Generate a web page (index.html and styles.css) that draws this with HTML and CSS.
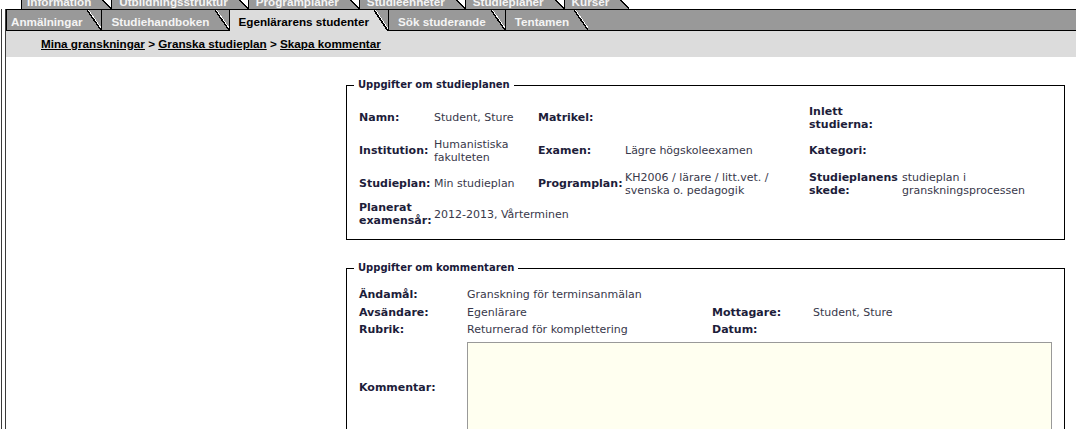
FILE: index.html
```html
<!DOCTYPE html>
<html>
	<head>
		<title>Skapa kommentar</title>
		<meta charset="utf-8">
		<link rel="stylesheet" href="styles.css">
	</head>

	<body>
		<ul class="tabs tabs_top">
			<li class="tab"><a href="#">Information</a></li>
			<li class="tab"><a href="#">Utbildningsstruktur</a></li>
			<li class="tab"><a href="#">Programplaner</a></li>
			<li class="tab"><a href="#">Studieenheter</a></li>
			<li class="tab"><a href="#">Studieplaner</a></li>
			<li class="tab"><a href="#">Kurser</a></li>
		</ul>

		<div class="frame">
			<div class="frame_inner">
				<ul class="tabs tabs_main">
					<li class="tab"><a href="#">Anmälningar</a></li>
					<li class="tab"><a href="#">Studiehandboken</a></li>
					<li class="tab tab_on"><a href="#">Egenlärarens studenter</a></li>
					<li class="tab"><a href="#">Sök studerande</a></li>
					<li class="tab"><a href="#">Tentamen</a></li>
				</ul>

				<p class="crumbs">
					<a href="#">Mina granskningar</a> &gt; <a href="#">Granska studieplan</a> &gt; <a href="#">Skapa kommentar</a>
				</p>

				<div class="content">
					<div class="side"></div>

					<div class="main">
						<fieldset class="box">
							<legend>Uppgifter om studieplanen</legend>
							<table class="info">
								<colgroup>
									<col class="w75">
									<col class="w104">
									<col class="w87">
									<col class="w184">
									<col class="w93">
									<col class="w148">
								</colgroup>
								<tr>
									<th>Namn:</th>
									<td>Student, Sture</td>
									<th>Matrikel:</th>
									<td></td>
									<th>Inlett studierna:</th>
									<td></td>
								</tr>
								<tr>
									<th>Institution:</th>
									<td>Humanistiska fakulteten</td>
									<th>Examen:</th>
									<td>Lägre högskoleexamen</td>
									<th>Kategori:</th>
									<td></td>
								</tr>
								<tr>
									<th>Studieplan:</th>
									<td>Min studieplan</td>
									<th>Programplan:</th>
									<td>KH2006 / lärare / litt.vet. / svenska o. pedagogik</td>
									<th>Studieplanens skede:</th>
									<td>studieplan i granskningsprocessen</td>
								</tr>
								<tr class="last">
									<th>Planerat examensår:</th>
									<td colspan="5">2012-2013, Vårterminen</td>
								</tr>
							</table>
						</fieldset>

						<fieldset class="box box_comment">
							<legend>Uppgifter om kommentaren</legend>
							<table class="note">
								<colgroup>
									<col class="w108">
									<col class="w245">
									<col class="w101">
									<col class="w238">
								</colgroup>
								<tr>
									<th>Ändamål:</th>
									<td>Granskning för terminsanmälan</td>
									<th></th>
									<td></td>
								</tr>
								<tr>
									<th>Avsändare:</th>
									<td>Egenlärare</td>
									<th>Mottagare:</th>
									<td>Student, Sture</td>
								</tr>
								<tr>
									<th>Rubrik:</th>
									<td>Returnerad för komplettering</td>
									<th>Datum:</th>
									<td></td>
								</tr>
								<tr class="text_row">
									<th>Kommentar:</th>
									<td colspan="3"><textarea class="comment"></textarea></td>
								</tr>
							</table>
						</fieldset>
					</div>
				</div>
			</div>
		</div>
	</body>
</html>
```

FILE: styles.css
```css
html {
	overflow: hidden;
}
body, ul, li, p, fieldset, legend, table, th, td {
	margin: 0;
	padding: 0;
}
li {
	list-style: none;
}

body {
	background: #fff;
	font: 11px/13px "DejaVu Sans", Verdana, sans-serif;
	color: #38384a;
}

/* flikar */
.tabs {
	display: flex;
	font: bold 11.7px/14px "Liberation Sans", Arial, sans-serif;
}
.tab {
	display: flex;
}
.tab a {
	display: block;
	background: #999;
	border-left: 1px solid #000;
	color: #f4f4f4;
	text-decoration: none;
	white-space: nowrap;
}
.tab::after {
	content: "";
	width: 14px;
	background: linear-gradient(to top right, #999 calc(50% - 0.7px), #000 calc(50% - 0.7px), #000 calc(50% + 0.7px), #fff calc(50% + 0.7px), #fff calc(50% + 1.6px), transparent calc(50% + 1.6px));
}

.tabs_top {
	margin: -10px 0 0 21px;
}
.tabs_top .tab a {
	padding: 5px 2px 0 7px;
}
.tabs_top .tab:first-child a {
	padding-left: 5px;
}
.tabs_top .tab::after {
	width: 18px;
}

.tabs_main {
	height: 20px;
	background: #999;
	border-top: 1px solid #000;
	border-bottom: 1px solid #000;
}
.tabs_main .tab a {
	padding: 5px 5px 1px 9px;
}
.tabs_main .tab:first-child a {
	padding-left: 4px;
}
.tabs_main .tab_on {
	height: 21px;
}
.tabs_main .tab_on a {
	background: #dcdcdc;
	color: #000;
}
.tabs_main .tab_on::after {
	background: linear-gradient(to top right, #dcdcdc calc(50% - 0.7px), #000 calc(50% - 0.7px), #000 calc(50% + 0.7px), #fff calc(50% + 0.7px), #fff calc(50% + 1.6px), transparent calc(50% + 1.6px));
}

/* ram */
.frame {
	margin-left: 1px;
	border-left: 1px solid #3a3a3a;
	padding-left: 3px;
}
.frame_inner {
	border-left: 1px solid #3a3a3a;
}

.crumbs {
	height: 26px;
	padding-left: 35px;
	background: #dcdcdc;
	font: bold 11.7px/26px "Liberation Sans", Arial, sans-serif;
	color: #000;
}
.crumbs a {
	color: #000;
	text-decoration: underline;
}

.content {
	display: flex;
	padding: 21px 11px 0 0;
}
.side {
	flex: none;
	width: 340px;
}
.main {
	width: 719px;
}

/* rutor */
.box {
	box-sizing: border-box;
	width: 719px;
	min-width: 0;
	margin: 0 0 21px;
	padding: 9px 12px 11px;
	border: 1px solid #000;
}
.box legend {
	margin-left: -5px;
	padding: 0 4px;
	font: bold 10px/14px "DejaVu Sans", Verdana, sans-serif;
	color: #1a1a3a;
}
.box_comment {
	padding-top: 11px;
}

.info, .note {
	table-layout: fixed;
	border-collapse: collapse;
}
.info {
	width: 691px;
}
.note {
	width: 692px;
}
.w75 { width: 75px; }
.w87 { width: 87px; }
.w93 { width: 93px; }
.w101 { width: 101px; }
.w104 { width: 104px; }
.w108 { width: 108px; }
.w148 { width: 148px; }
.w184 { width: 184px; }
.w238 { width: 238px; }
.w245 { width: 245px; }

.info th, .note th {
	text-align: left;
	font-weight: bold;
	color: #1d1d3a;
}
.info th, .info td {
	height: 33px;
	vertical-align: middle;
}
.info .last th, .info .last td {
	height: 28px;
}
.note th, .note td {
	height: 17.5px;
	vertical-align: middle;
}
.note .text_row td {
	padding: 3px 0;
}

.comment {
	display: block;
	box-sizing: border-box;
	width: 585px;
	height: 92px;
	margin: 0;
	padding: 2px;
	border: 1px solid #999;
	background: #fffff0;
	resize: none;
	font: 11px "DejaVu Sans", Verdana, sans-serif;
}
```
